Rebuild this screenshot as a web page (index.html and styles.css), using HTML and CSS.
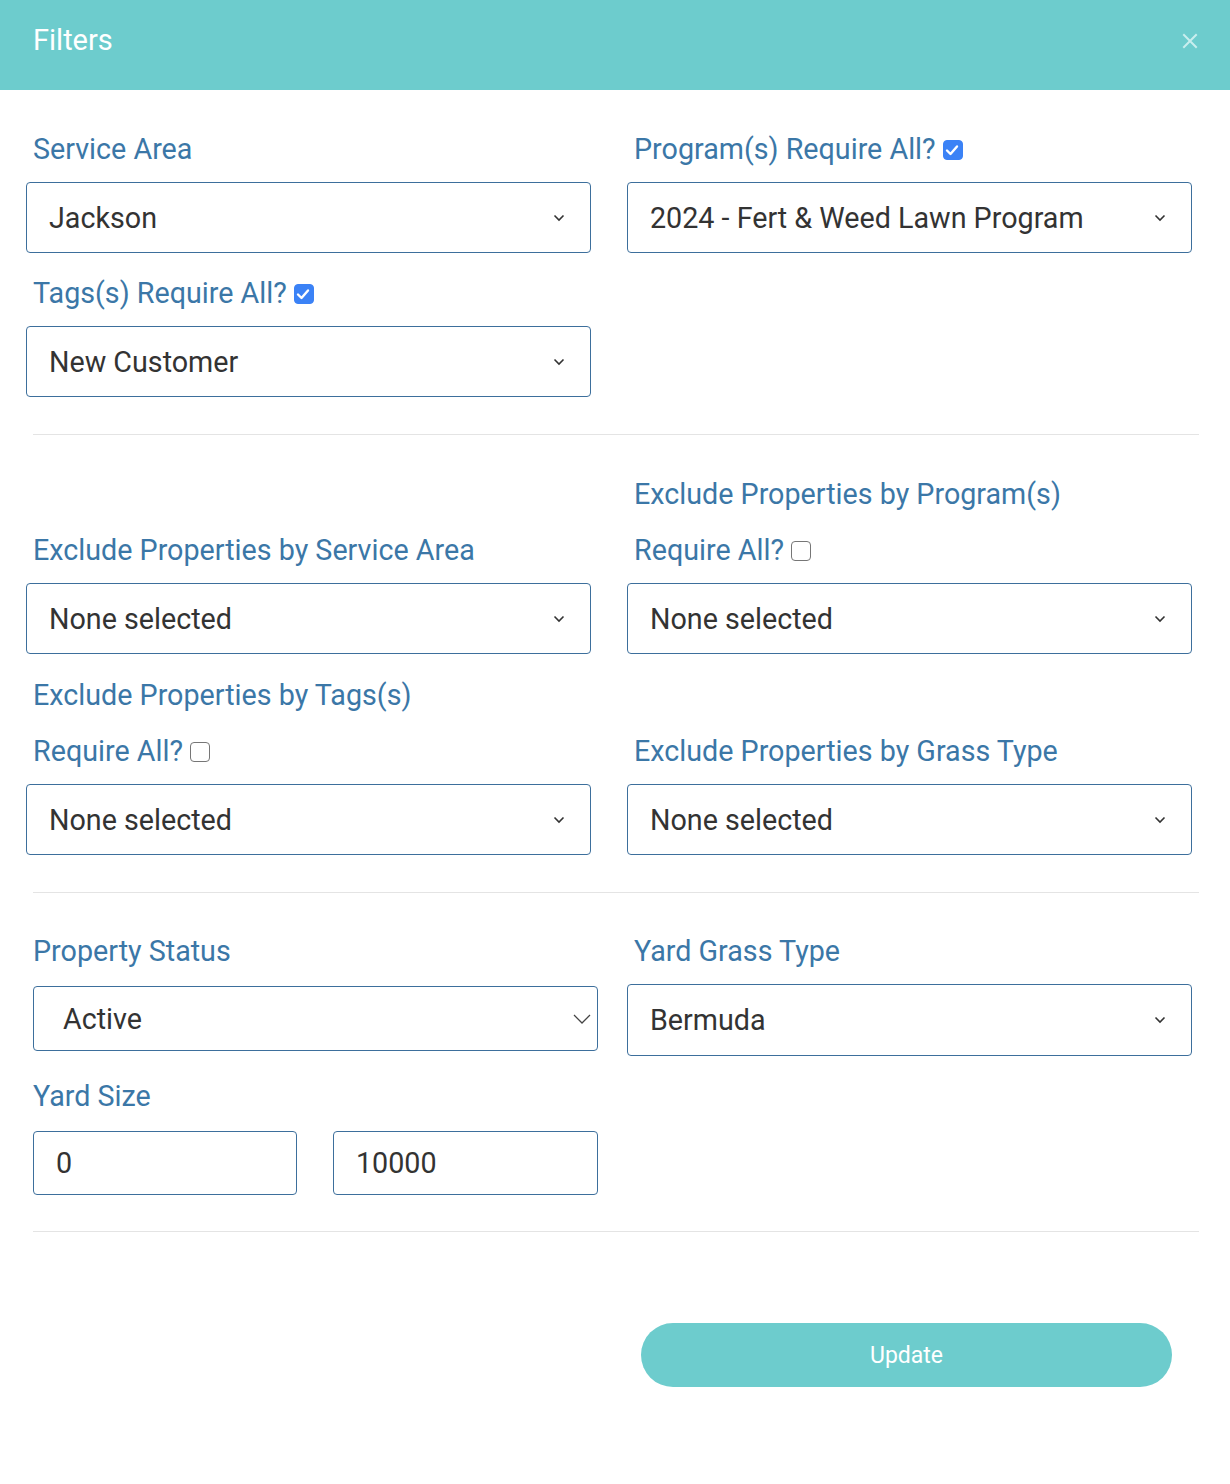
FILE: index.html
```html
<!DOCTYPE html>
<html lang="en">
<head>
<meta charset="utf-8">
<title>Filters</title>
<link rel="stylesheet" href="styles.css">
</head>
<body>
<div class="modal">
  <header class="modal-header">
    <h1 class="modal-title">Filters</h1>
    <span class="close" aria-label="Close">
      <svg width="16" height="16" viewBox="0 0 16 16"><path d="M2 2 L14 14 M14 2 L2 14" stroke="currentColor" stroke-width="2" stroke-linecap="square" fill="none"/></svg>
    </span>
  </header>
  <div class="modal-body">
    <section class="grid">
      <div class="field">
        <div class="label">Service Area</div>
        <div class="select"><span>Jackson</span><svg class="chev" width="12" height="8" viewBox="0 0 12 8"><path d="M1.5 1.5 L6 6 L10.5 1.5" stroke="#333" stroke-width="1.6" fill="none"/></svg></div>
      </div>
      <div class="field">
        <div class="label">Program(s) Require All?<span class="cb checked"><svg width="20" height="20" viewBox="0 0 20 20"><path d="M5 10.5 L8.5 14 L15 6.5" stroke="#fff" stroke-width="2.4" fill="none" stroke-linecap="round" stroke-linejoin="round"/></svg></span></div>
        <div class="select"><span>2024 - Fert &amp; Weed Lawn Program</span><svg class="chev" width="12" height="8" viewBox="0 0 12 8"><path d="M1.5 1.5 L6 6 L10.5 1.5" stroke="#333" stroke-width="1.6" fill="none"/></svg></div>
      </div>
      <div class="field">
        <div class="label">Tags(s) Require All?<span class="cb checked"><svg width="20" height="20" viewBox="0 0 20 20"><path d="M5 10.5 L8.5 14 L15 6.5" stroke="#fff" stroke-width="2.4" fill="none" stroke-linecap="round" stroke-linejoin="round"/></svg></span></div>
        <div class="select"><span>New Customer</span><svg class="chev" width="12" height="8" viewBox="0 0 12 8"><path d="M1.5 1.5 L6 6 L10.5 1.5" stroke="#333" stroke-width="1.6" fill="none"/></svg></div>
      </div>
    </section>
    <hr class="divider divider-first">
    <section class="grid grid-end">
      <div class="field">
        <div class="label">Exclude Properties by Service Area</div>
        <div class="select"><span>None selected</span><svg class="chev" width="12" height="8" viewBox="0 0 12 8"><path d="M1.5 1.5 L6 6 L10.5 1.5" stroke="#333" stroke-width="1.6" fill="none"/></svg></div>
      </div>
      <div class="field">
        <div class="label">Exclude Properties by Program(s)<br>Require All?<span class="cb"></span></div>
        <div class="select"><span>None selected</span><svg class="chev" width="12" height="8" viewBox="0 0 12 8"><path d="M1.5 1.5 L6 6 L10.5 1.5" stroke="#333" stroke-width="1.6" fill="none"/></svg></div>
      </div>
      <div class="field">
        <div class="label">Exclude Properties by Tags(s)<br>Require All?<span class="cb"></span></div>
        <div class="select"><span>None selected</span><svg class="chev" width="12" height="8" viewBox="0 0 12 8"><path d="M1.5 1.5 L6 6 L10.5 1.5" stroke="#333" stroke-width="1.6" fill="none"/></svg></div>
      </div>
      <div class="field">
        <div class="label">Exclude Properties by Grass Type</div>
        <div class="select"><span>None selected</span><svg class="chev" width="12" height="8" viewBox="0 0 12 8"><path d="M1.5 1.5 L6 6 L10.5 1.5" stroke="#333" stroke-width="1.6" fill="none"/></svg></div>
      </div>
    </section>
    <hr class="divider">
    <section class="grid grid-start">
      <div class="field">
        <div class="label">Property Status</div>
        <div class="native-select"><span>Active</span><svg class="chev-native" width="18" height="10" viewBox="0 0 18 10"><path d="M1 1 L9 9 L17 1" stroke="#444" stroke-width="1.3" fill="none"/></svg></div>
        <div class="label label-yard">Yard Size</div>
        <div class="range">
          <div class="text-input">0</div>
          <div class="text-input">10000</div>
        </div>
      </div>
      <div class="field">
        <div class="label">Yard Grass Type</div>
        <div class="select select-grass"><span>Bermuda</span><svg class="chev" width="12" height="8" viewBox="0 0 12 8"><path d="M1.5 1.5 L6 6 L10.5 1.5" stroke="#333" stroke-width="1.6" fill="none"/></svg></div>
      </div>
    </section>
    <hr class="divider divider-last">
    <div class="footer">
      <div></div>
      <div class="footer-right"><button class="btn-update">Update</button></div>
    </div>
  </div>
</div>
</body>
</html>
```

FILE: styles.css
```css
* { box-sizing: border-box; }
html, body { margin: 0; padding: 0; background: #fff; }
body { font-family: Roboto, "Noto Sans", Arial, sans-serif; color: #333; }

.modal { width: 1230px; min-height: 1484px; background: #fff; }

.modal-header {
  height: 90px;
  background: #6dcccd;
  display: flex;
  align-items: center;
  justify-content: space-between;
  padding: 0 32px 0 33px;
}
.modal-title {
  margin: 0;
  font-size: 29px;
  font-weight: 400;
  color: #fff;
  line-height: 1;
  padding-bottom: 10px;
}
.close { color: #c9eeee; display: flex; padding-bottom: 8px; }

.modal-body { padding: 31px 31px 0 33px; }

.grid {
  display: grid;
  grid-template-columns: 1fr 1fr;
  column-gap: 36px;
  row-gap: 12px;
}
.grid-end { align-items: end; row-gap: 13px; }
.grid-start { align-items: start; }

.field { display: flex; flex-direction: column; }

.label {
  font-size: 28.7px;
  line-height: 56px;
  color: #3b77a7;
  margin-bottom: 5px;
}
.cb {
  display: inline-block;
  width: 20px;
  height: 20px;
  margin-left: 7px;
  border: 1.5px solid #767676;
  border-radius: 4px;
  vertical-align: -1px;
  background: #fff;
}
.cb.checked { background: #3b82f6; border-color: #3b82f6; }
.cb.checked svg { display: block; margin: -1.5px; }

.select {
  margin-left: -7px;
  width: 565px;
  height: 71px;
  border: 1px solid #3d6f9c;
  border-radius: 4px;
  display: flex;
  align-items: center;
  justify-content: space-between;
  padding: 0 25px 0 22px;
  font-size: 28.7px;
  color: #333;
}
.select-grass { height: 72px; }
.chev { display: block; }

.native-select {
  width: 565px;
  height: 65px;
  margin-top: 2px;
  border: 1px solid #3d6f9c;
  border-radius: 4px;
  display: flex;
  align-items: center;
  justify-content: space-between;
  padding: 0 6px 0 29px;
  font-size: 28.7px;
  color: #333;
}
.chev-native { display: block; }

.label-yard { margin-top: 17px; }

.range { display: flex; gap: 36px; margin-top: 2px; }
.text-input {
  width: 264px;
  height: 64px;
  border: 1px solid #3d6f9c;
  border-radius: 4px;
  display: flex;
  align-items: center;
  padding-left: 22px;
  font-size: 28.7px;
  color: #333;
}
.text-input + .text-input { width: 265px; }

.divider {
  border: 0;
  border-top: 1px solid #e4e4e4;
  margin: 37px 0 30px;
  height: 0;
}
.divider-first { margin-bottom: 31px; }
.divider-last { margin-top: 36px; }

.footer { display: grid; grid-template-columns: 1fr 1fr; column-gap: 36px; padding-top: 61px; }
.footer-right { padding-left: 7px; }
.btn-update {
  width: 531px;
  height: 64px;
  border: 0;
  border-radius: 32px;
  background: #6dcccd;
  color: #fff;
  font-family: Roboto, "Noto Sans", Arial, sans-serif;
  font-size: 23px;
  display: block;
}
```
